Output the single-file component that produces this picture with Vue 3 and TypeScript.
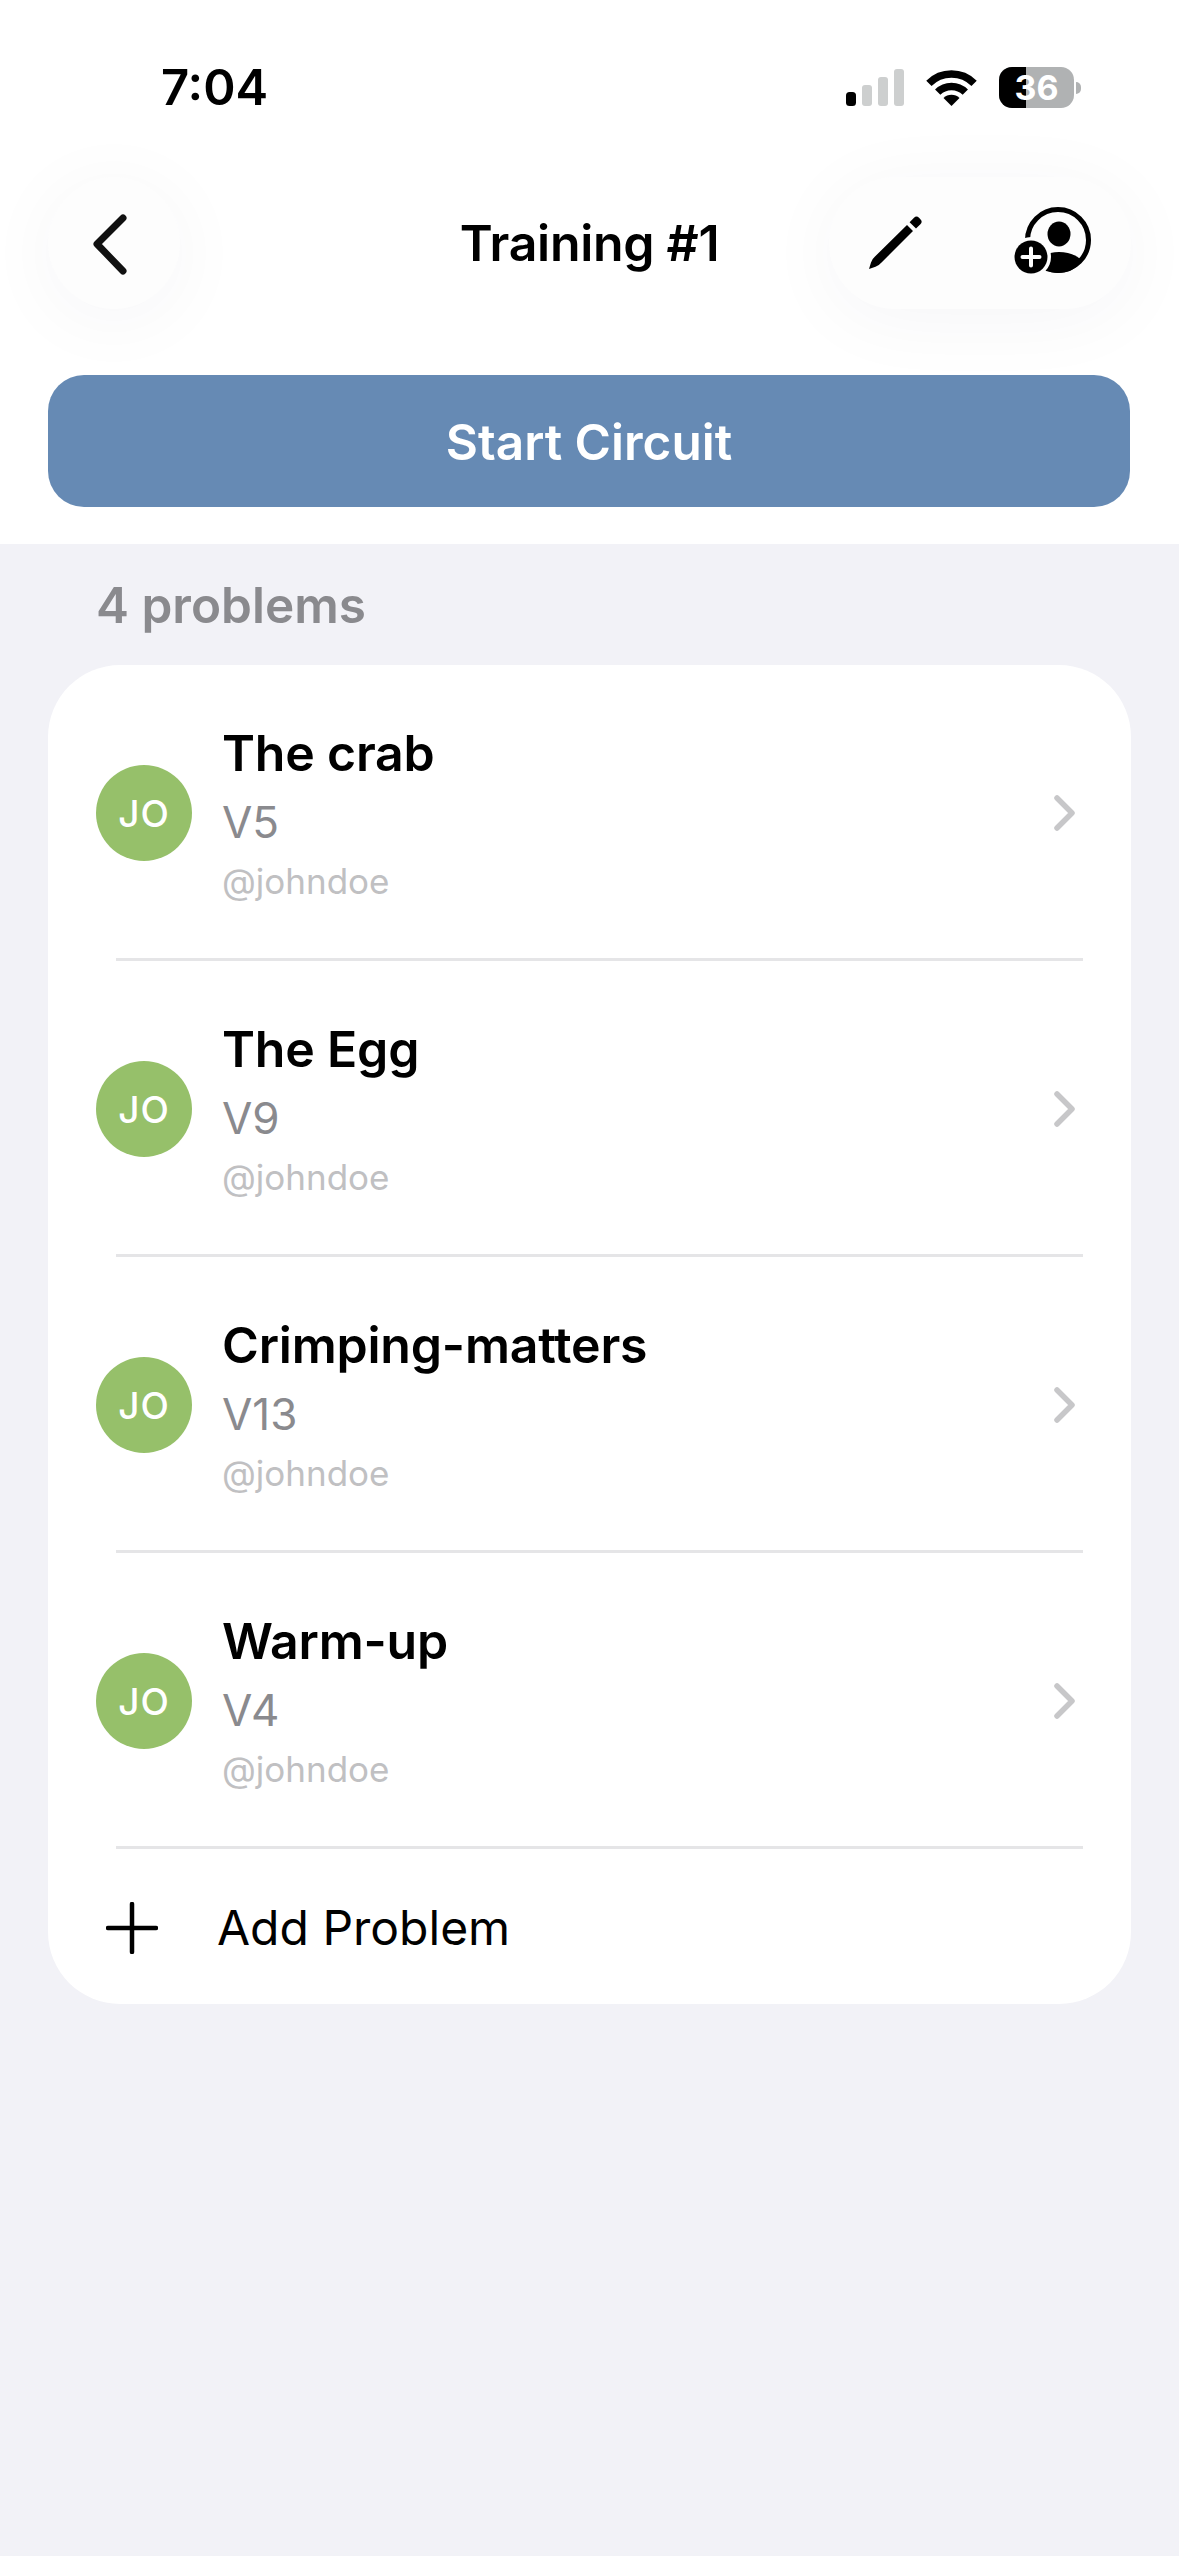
<script setup lang="ts">
interface Problem { name: string; grade: string; user: string }
const problems: Problem[] = [
  { name: 'The crab', grade: 'V5', user: '@johndoe' },
  { name: 'The Egg', grade: 'V9', user: '@johndoe' },
  { name: 'Crimping-matters', grade: 'V13', user: '@johndoe' },
  { name: 'Warm-up', grade: 'V4', user: '@johndoe' },
]
</script>

<template>
  <div class="screen">
    <header class="top">
      <div class="status">
        <span class="time">7:04</span>
        <div class="status-icons">
          <svg class="signal" width="58" height="37" viewBox="0 0 58 37">
            <rect x="0" y="23" width="10" height="14" rx="3.5" fill="#000" />
            <rect x="16" y="16" width="10" height="21" rx="3" fill="#cdcfcf" />
            <rect x="32" y="8" width="10" height="29" rx="3" fill="#cdcfcf" />
            <rect x="48" y="0" width="10" height="37" rx="3" fill="#cdcfcf" />
          </svg>
          <svg class="wifi" width="51" height="37" viewBox="0 0 51 37">
            <path d="M2.9 14.4A32 32 0 0 1 48.1 14.4" fill="none" stroke="#000" stroke-width="7.5" />
            <path d="M11.7 23.2A19.5 19.5 0 0 1 39.3 23.2" fill="none" stroke="#000" stroke-width="7.5" />
            <path d="M25.5 37L17.5 29A11.3 11.3 0 0 1 33.5 29Z" fill="#000" />
          </svg>
          <div class="battery">
            <div class="cell">
              <span class="cell-fill"></span>
              <span class="cell-num">36</span>
            </div>
            <span class="nub"></span>
          </div>
        </div>
      </div>

      <nav class="nav">
        <button class="round back" type="button" aria-label="Back">
          <svg width="40" height="64" viewBox="0 0 40 64">
            <path d="M33 7L7 33L33 60" fill="none" stroke="#111" stroke-width="7" stroke-linecap="round" stroke-linejoin="round" />
          </svg>
        </button>
        <h1 class="title">Training #1</h1>
        <div class="round pill">
          <svg class="pencil" width="60" height="60" viewBox="0 0 60 60">
            <path d="M4 56L6 49.5Q7 46 10 43.5L42 12L48 18L16.5 49.5Q14 52.5 10.5 53.8Z" fill="#000" />
            <path d="M44.6 9.2L49 4.8A3.5 3.5 0 0 1 54 4.8L55.4 6.2A3.5 3.5 0 0 1 55.4 11.2L51 15.6Z" fill="#000" />
          </svg>
          <svg class="person" width="84" height="74" viewBox="0 0 84 74">
            <circle cx="46" cy="34" r="30.5" fill="none" stroke="#000" stroke-width="5" />
            <ellipse cx="47" cy="28" rx="11.5" ry="12.5" fill="#000" />
            <path d="M24 56C29 49 38 46 47 46C56 46 65 49 70 55C64 63 56 67 46 67C37 67 30 63 24 56Z" fill="#000" />
            <circle cx="19" cy="51" r="20" fill="#fdfdfd" />
            <circle cx="19" cy="51" r="16.5" fill="#000" />
            <path d="M19 42.5V59.5M10.5 51H27.5" stroke="#fff" stroke-width="4" stroke-linecap="round" />
          </svg>
        </div>
      </nav>

      <button class="start" type="button">Start Circuit</button>
    </header>

    <main class="content">
      <h2 class="count">4 problems</h2>
      <section class="card">
        <div v-for="p in problems" :key="p.name" class="row">
          <div class="avatar">JO</div>
          <div class="lines">
            <div class="name">{{ p.name }}</div>
            <div class="grade">{{ p.grade }}</div>
            <div class="user">{{ p.user }}</div>
          </div>
          <svg class="chev" width="21" height="36" viewBox="0 0 21 36">
            <path d="M3 3L18 18L3 33" fill="none" stroke="#c7c7c9" stroke-width="5.5" stroke-linecap="round" stroke-linejoin="round" />
          </svg>
        </div>
        <div class="add">
          <svg class="plus" width="52" height="52" viewBox="0 0 52 52">
            <path d="M26 2V50M2 26H50" stroke="#000" stroke-width="4.5" stroke-linecap="round" />
          </svg>
          <span class="add-label">Add Problem</span>
        </div>
      </section>
    </main>
  </div>
</template>

<style>
html, body { margin: 0; background: #f2f2f7; }
</style>

<style scoped>
.screen {
  width: 1179px;
  min-height: 2556px;
  background: #f2f2f7;
  font-family: Inter, "Liberation Sans", sans-serif;
  color: #000;
}
.top {
  background: #fff;
  height: 544px;
  box-sizing: border-box;
  padding: 0 48px;
  overflow: hidden;
}
.status {
  height: 177px;
  display: flex;
  justify-content: space-between;
  align-items: flex-start;
  margin: 0 -48px;
  padding: 0 98px 0 161px;
  box-sizing: border-box;
}
.time {
  font-size: 49px;
  font-weight: 600;
  line-height: 60px;
  margin-top: 58px;
}
.status-icons {
  display: flex;
  align-items: flex-start;
  margin-top: 67px;
}
.signal { margin-top: 2px; }
.wifi { margin: 2px 0 0 22px; }
.battery {
  display: flex;
  align-items: center;
  margin-left: 22px;
}
.cell {
  position: relative;
  width: 75px;
  height: 41px;
  border-radius: 13px;
  overflow: hidden;
  background: #b0b2b3;
}
.cell-fill {
  position: absolute;
  left: 0;
  top: 0;
  bottom: 0;
  width: 27px;
  background: #000;
}
.cell-num {
  position: absolute;
  inset: 0;
  text-align: center;
  color: #fff;
  font-size: 34px;
  font-weight: 700;
  line-height: 41px;
}
.nub {
  width: 5px;
  height: 12px;
  margin-left: 2px;
  border-radius: 0 6px 6px 0;
  background: #b0b2b3;
}
.nav {
  display: flex;
  align-items: center;
  justify-content: space-between;
  height: 132px;
  position: relative;
}
.round {
  background: #fdfdfd;
  border: 0;
  height: 132px;
  box-shadow: 0 10px 80px rgba(30, 30, 60, 0.045);
  display: flex;
  align-items: center;
  box-sizing: border-box;
}
.back {
  width: 132px;
  border-radius: 50%;
  padding: 0 0 0 42px;
}
.title {
  position: absolute;
  left: 0;
  right: 0;
  margin: 0;
  text-align: center;
  font-size: 50px;
  font-weight: 600;
  letter-spacing: -0.3px;
  line-height: 60px;
  top: 36px;
  pointer-events: none;
}
.pill {
  width: 302px;
  border-radius: 66px;
  padding-left: 36px;
}
.pencil { flex: none; }
.person { flex: none; margin-left: 87px; }
.start {
  display: block;
  width: 1082px;
  height: 132px;
  margin-top: 66px;
  padding: 2px 0 0;
  border: 0;
  border-radius: 36px;
  background: #668ab4;
  color: #fff;
  font-family: inherit;
  font-size: 49.5px;
  font-weight: 600;
}
.content { padding: 0 48px; }
.count {
  margin: 0;
  height: 121px;
  box-sizing: border-box;
  padding: 32px 0 0 48px;
  color: #8a8a8e;
  font-size: 49.5px;
  font-weight: 600;
  line-height: 58px;
}
.card {
  background: #fff;
  border-radius: 72px;
  overflow: hidden;
  height: 1339px;
}
.row {
  height: 296px;
  box-sizing: border-box;
  display: flex;
  align-items: center;
  padding: 0 56px 0 48px;
  position: relative;
}
.row::after, .add::before {
  content: "";
  position: absolute;
  left: 68px;
  right: 48px;
  height: 3px;
  background: #e5e5e7;
}
.row::after { bottom: 0; }
.add::before { top: -3px; }
.avatar {
  width: 96px;
  height: 96px;
  flex: none;
  border-radius: 50%;
  background: #96c06a;
  color: #fff;
  font-size: 37px;
  font-weight: 500;
  letter-spacing: 1px;
  display: flex;
  align-items: center;
  justify-content: center;
}
.lines {
  flex: 1;
  margin-left: 30px;
  display: flex;
  flex-direction: column;
}
.name {
  font-size: 50px;
  font-weight: 600;
  letter-spacing: -0.2px;
  line-height: 62px;
}
.grade {
  margin-top: 8px;
  color: #8a8a8e;
  font-size: 44px;
  line-height: 60px;
}
.user {
  margin-top: 6px;
  color: #c0c0c2;
  font-size: 35px;
  line-height: 46px;
}
.chev { flex: none; }
.add {
  position: relative;
  height: 157px;
  display: flex;
  align-items: center;
  padding-left: 58px;
}
.plus { flex: none; }
.add-label {
  margin-left: 59px;
  font-size: 48px;
  line-height: 60px;
}
</style>
